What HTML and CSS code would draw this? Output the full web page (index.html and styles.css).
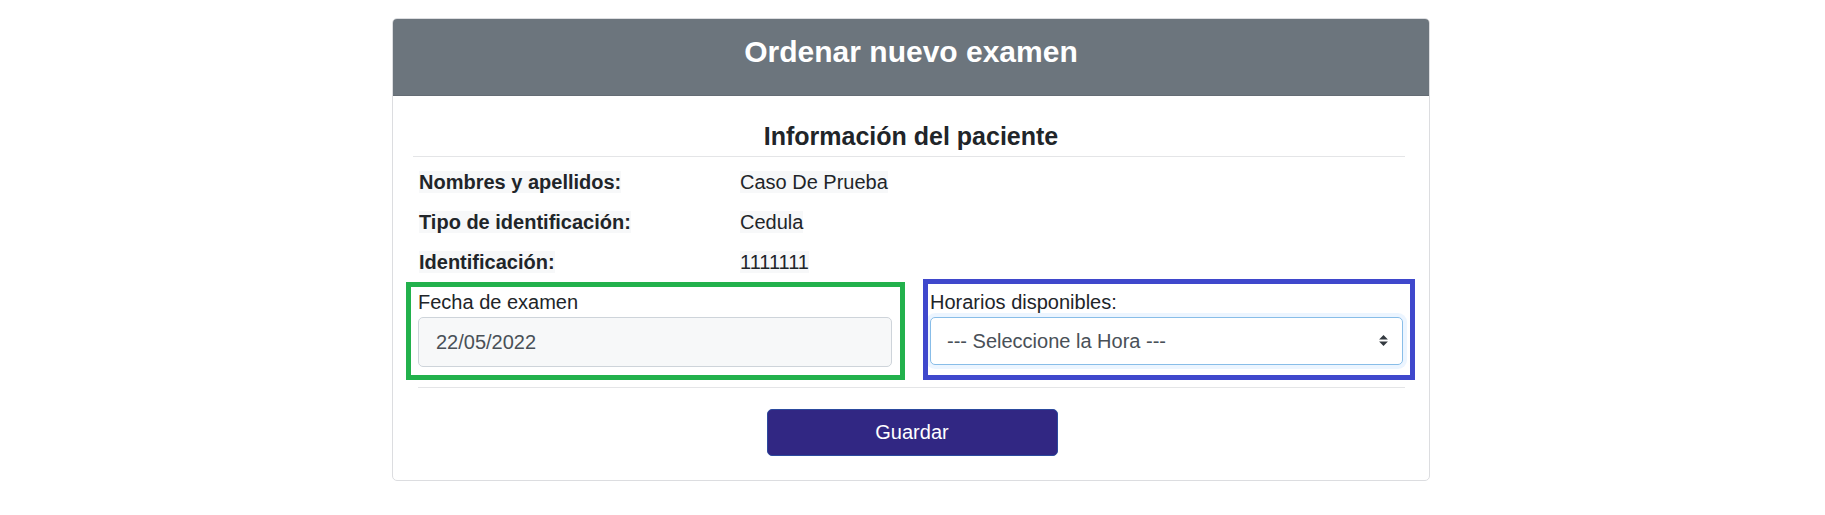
FILE: index.html
```html
<!DOCTYPE html>
<html lang="es">
<head>
<meta charset="utf-8">
<title>Ordenar nuevo examen</title>
<link rel="stylesheet" href="styles.css">
</head>
<body>
<div class="card">
  <div class="card-header">
    <h3 class="card-title">Ordenar nuevo examen</h3>
  </div>
  <div class="card-body">
    <h5 class="section-title">Información del paciente</h5>
    <hr class="divider">
    <table class="info">
      <tr>
        <td class="info-label"><span class="chip strong">Nombres y apellidos:</span></td>
        <td class="info-value"><span class="chip">Caso De Prueba</span></td>
      </tr>
      <tr>
        <td class="info-label"><span class="chip strong">Tipo de identificación:</span></td>
        <td class="info-value"><span class="chip">Cedula</span></td>
      </tr>
      <tr>
        <td class="info-label"><span class="chip strong">Identificación:</span></td>
        <td class="info-value"><span class="chip">1111111</span></td>
      </tr>
    </table>
    <div class="form-row">
      <div class="field">
        <label class="field-label" for="fecha">Fecha de examen</label>
        <input class="field-input" id="fecha" type="text" value="22/05/2022" readonly>
      </div>
      <div class="field">
        <label class="field-label" for="hora">Horarios disponibles:</label>
        <div class="select-wrap">
          <select class="field-select" id="hora">
            <option>--- Seleccione la Hora ---</option>
          </select>
          <svg class="select-caret" width="9" height="11" viewBox="0 0 4 5"><path d="M2 0L0 2h4zm0 5L0 3h4z" fill="#343a40"/></svg>
        </div>
      </div>
      <div class="mark mark-green"></div>
      <div class="mark mark-blue"></div>
    </div>
    <hr class="divider divider-form">
    <div class="actions">
      <button class="btn-save" type="button">Guardar</button>
    </div>
  </div>
</div>
</body>
</html>
```
FILE: styles.css
```css
* { box-sizing: border-box; }
html, body { margin: 0; padding: 0; background: #ffffff; }
body {
  font-family: "Liberation Sans", Arial, sans-serif;
  font-size: 20px;
  line-height: 30px;
  color: #212529;
}
.card {
  width: 1038px;
  margin: 18px 0 0 392px;
  border: 1px solid #dcdde0;
  border-radius: 5px;
  overflow: hidden;
  background: #fff;
}
.card-header {
  background: #6c757d;
  padding: 15px 25px;
  border-bottom: 1px solid #646c74;
}
.card-title {
  margin: 0 0 10px;
  font-size: 30px;
  line-height: 36px;
  font-weight: bold;
  color: #ffffff;
  text-align: center;
}
.card-body {
  padding: 25px 24px 24px 20px;
}
.section-title {
  margin: 0;
  font-size: 25px;
  line-height: 30px;
  font-weight: bold;
  text-align: center;
  padding-left: 4px;
}
.divider {
  margin: 5px 0 0;
  border: 0;
  border-top: 1px solid #e4e5e7;
  height: 0;
}
.divider-form {
  margin: 20px 0 0 5px;
}
.info {
  border-collapse: collapse;
  margin-top: 5px;
}
.info td {
  padding: 5px 4px;
  vertical-align: top;
}
.info-label {
  width: 323px;
}
.info td.info-label { padding-left: 6px; }
.chip {
  background: #f7f8f9;
}
.strong { font-weight: bold; }
.form-row {
  position: relative;
  margin-top: 5px;
  padding-left: 5px;
  display: grid;
  grid-template-columns: 474px 473px;
  column-gap: 38px;
}
.field {
  display: flex;
  flex-direction: column;
}
.field-label {
  display: block;
  font-size: 20px;
  line-height: 30px;
  color: #212529;
}
.field-input {
  height: 50px;
  width: 100%;
  padding: 0 17px 0 17px;
  font-family: inherit;
  font-size: 20px;
  color: #495057;
  background: #f7f8f9;
  border: 1px solid #ced4da;
  border-radius: 5px;
  outline: none;
}
.select-wrap {
  position: relative;
  height: 48px;
}
.field-select {
  appearance: none;
  -webkit-appearance: none;
  width: 100%;
  height: 48px;
  padding: 0 40px 0 16px;
  font-family: inherit;
  font-size: 20px;
  color: #495057;
  background: #ffffff;
  border: 1px solid #88bde8;
  border-radius: 5px;
  box-shadow: 0 0 0 4px rgba(100, 170, 255, 0.12);
  outline: none;
}
.select-caret {
  position: absolute;
  right: 15px;
  top: 18px;
  pointer-events: none;
}
.mark {
  position: absolute;
  border: 5px solid;
  pointer-events: none;
}
.mark-green {
  border-color: #22b14c;
  left: -7px;
  top: -5px;
  width: 499px;
  height: 98px;
}
.mark-blue {
  border-color: #3f48cc;
  left: 510px;
  top: -8px;
  width: 492px;
  height: 101px;
}
.actions {
  display: flex;
  justify-content: center;
  padding-top: 21px;
}
.btn-save {
  width: 291px;
  height: 47px;
  font-family: inherit;
  font-size: 20px;
  color: #ffffff;
  background: #312783;
  border: 1px solid #2c4a9e;
  border-radius: 5px;
  margin-left: 6px;
}
```
